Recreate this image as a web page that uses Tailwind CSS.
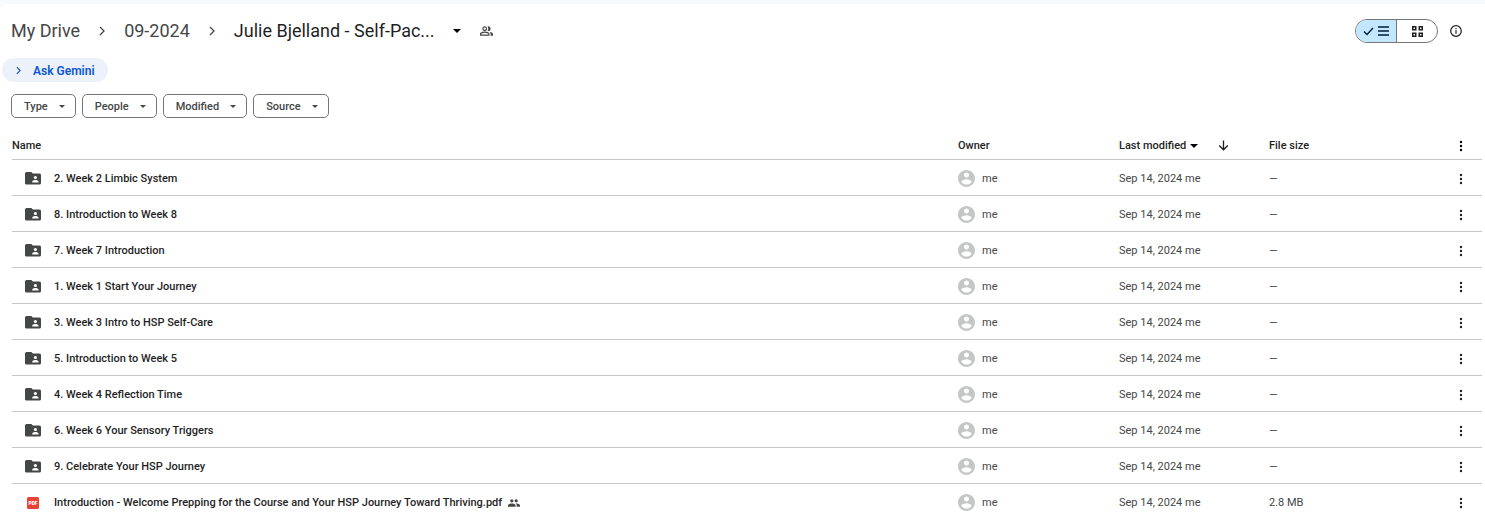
<!DOCTYPE html>
<html lang="en">
<head>
  <meta charset="UTF-8">
  <meta name="viewport" content="width=device-width, initial-scale=1.0">
  <title>Google Drive</title>
  <script src="https://cdn.jsdelivr.net/npm/@tailwindcss/browser@4"></script>
</head>
<body class="bg-[#f8fafd] pt-1 overflow-hidden font-['Roboto','Liberation_Sans',sans-serif] text-[11px] leading-4 text-[#1f1f1f]">
  <!-- Shared icons -->
  <svg class="hidden">
    <symbol id="folder" viewBox="0 0 16 13">
      <path fill="#444746" d="M1.500 0h4.800l1.600 1.600h6.600a1.500 1.500 0 0 1 1.500 1.500v8a1.500 1.500 0 0 1-1.500 1.500h-13a1.500 1.500 0 0 1-1.500-1.500v-9.600a1.500 1.500 0 0 1 1.500-1.500z"/>
      <circle cx="10.400" cy="5.500" r="1.600" fill="#fff"/>
      <path fill="#fff" d="M7.200 10.500v-.7c0-1.200 2-1.800 3.200-1.800s3.200.6 3.200 1.800v.7z"/>
    </symbol>
    <symbol id="pdf" viewBox="0 0 12 12">
      <rect width="12" height="12" rx="1.500" fill="#ea4335"/>
      <text x="6" y="7.700" text-anchor="middle" font-size="5" font-weight="900" fill="#fff">PDF</text>
    </symbol>
    <symbol id="avatar" viewBox="2 2 20 20">
      <path fill="#c4c7c5" d="M12 2C6.480 2 2 6.480 2 12s4.480 10 10 10 10-4.480 10-10S17.520 2 12 2zm0 3c1.660 0 3 1.340 3 3s-1.340 3-3 3-3-1.340-3-3 1.340-3 3-3zm0 14.200c-2.500 0-4.710-1.280-6-3.220.03-1.990 4-3.080 6-3.080 1.990 0 5.970 1.090 6 3.080-1.290 1.940-3.500 3.220-6 3.220z"/>
    </symbol>
    <symbol id="dots" viewBox="0 0 4 12">
      <circle cx="2" cy="2" r="1.200"/><circle cx="2" cy="6" r="1.200"/><circle cx="2" cy="10" r="1.200"/>
    </symbol>
    <symbol id="caret" viewBox="0 0 10 5"><path d="M0 0h10L5 5z"/></symbol>
    <symbol id="chevron" viewBox="0 0 6 10"><path d="M1 1l4 4-4 4" fill="none" stroke="currentColor" stroke-width="1.300"/></symbol>
    <symbol id="people" viewBox="1 4 22 16">
      <path d="M16.670 13.130C18.040 14.060 19 15.320 19 17v3h4v-3c0-2.180-3.570-3.470-6.330-3.870z"/>
      <path d="M15 12c2.210 0 4-1.790 4-4s-1.790-4-4-4c-.47 0-.91.1-1.330.24C14.500 5.270 15 6.580 15 8s-.5 2.730-1.330 3.760c.42.140.86.240 1.330.240z"/>
      <path d="M9 12c2.210 0 4-1.790 4-4s-1.790-4-4-4-4 1.790-4 4 1.790 4 4 4zm0-6c1.100 0 2 .9 2 2s-.9 2-2 2-2-.9-2-2 .9-2 2-2zm0 7c-2.670 0-8 1.340-8 4v3h16v-3c0-2.660-5.330-4-8-4zm6 5H3v-.99C3.200 16.290 6.300 15 9 15s5.800 1.290 6 2v1z"/>
    </symbol>
    <symbol id="group" viewBox="1 5 22 14">
      <path d="M16 11c1.660 0 2.990-1.340 2.990-3S17.660 5 16 5s-3 1.340-3 3 1.340 3 3 3zm-8 0c1.660 0 2.990-1.340 2.990-3S9.660 5 8 5 5 6.340 5 8s1.340 3 3 3zm0 2c-2.330 0-7 1.170-7 3.500V19h14v-2.500c0-2.330-4.670-3.500-7-3.500zm8 0c-.29 0-.62.020-.97.050 1.160.84 1.970 1.970 1.970 3.450V19h6v-2.500c0-2.330-4.670-3.500-7-3.500z"/>
    </symbol>
  </svg>

  <main class="bg-white rounded-tl-lg pr-[3px]">
    <header class="flex items-center justify-between h-[54px] pl-[11px] pr-5">
      <nav class="flex items-center gap-[19px] text-lg text-[#444746]" aria-label="Breadcrumb">
        <a href="#">My Drive</a>
        <svg class="w-[6px] h-[10px]"><use href="#chevron"/></svg>
        <a href="#">09-2024</a>
        <svg class="w-[6px] h-[10px]"><use href="#chevron"/></svg>
        <button class="flex items-center gap-[18px] text-[#1f1f1f]">Julie Bjelland - Self-Pac... <svg class="w-2 h-1"><use href="#caret"/></svg></button>
        <button aria-label="Shared"><svg class="w-[13px] h-[10px]" fill="currentColor"><use href="#people"/></svg></button>
      </nav>
      <div class="flex items-center gap-3">
        <div class="flex h-6 w-[83px] rounded-full border border-[#747775] overflow-hidden">
          <button class="flex-1 flex items-center justify-center gap-1 bg-[#c2e7ff] border-r border-[#747775] text-[#001d35]" aria-label="List layout">
            <svg class="w-[11px] h-[9px]" viewBox="0 0 11 9" fill="none" stroke="currentColor" stroke-width="1.300"><path d="M1 4.500l3 3L10 1"/></svg>
            <svg class="w-[11px] h-[10px]" viewBox="0 0 11 10" stroke="currentColor" stroke-width="1.500"><path d="M0 1h11M0 5h11M0 9h11"/></svg>
          </button>
          <button class="flex-1 flex items-center justify-center" aria-label="Grid layout">
            <svg class="w-[11px] h-[11px]" viewBox="0 0 11 11" fill="none" stroke="currentColor" stroke-width="1.500"><path d="M.75.75h3v3h-3zM7.250.75h3v3h-3zM.75 7.250h3v3h-3zM7.250 7.250h3v3h-3z"/></svg>
          </button>
        </div>
        <button aria-label="View details">
          <svg class="w-3 h-3" viewBox="0 0 12 12" fill="none" stroke="currentColor" stroke-width="1.200"><circle cx="6" cy="6" r="5.300"/><path d="M6 5.200v3.500M6 3v1.300"/></svg>
        </button>
      </div>
    </header>

    <button class="flex items-center gap-3 ml-[2px] h-6 w-[106px] pt-px pl-[14px] rounded-full bg-[#ecf1fa] text-[#0b57d0] text-xs font-semibold">
      <svg class="w-[5px] h-[9px]"><use href="#chevron"/></svg>
      Ask Gemini
    </button>

    <div class="flex gap-[6px] mt-3 pl-[11px] font-medium text-[#444746]">
      <button class="flex items-center gap-[11px] h-6 px-3 pt-px pr-[10px] rounded-[5px] border border-[#747775]">Type <svg class="w-[6px] h-[3px]" fill="currentColor"><use href="#caret"/></svg></button>
      <button class="flex items-center gap-[11px] h-6 px-3 pt-px pr-[10px] rounded-[5px] border border-[#747775]">People <svg class="w-[6px] h-[3px]" fill="currentColor"><use href="#caret"/></svg></button>
      <button class="flex items-center gap-[11px] h-6 px-3 pt-px pr-[10px] rounded-[5px] border border-[#747775]">Modified <svg class="w-[6px] h-[3px]" fill="currentColor"><use href="#caret"/></svg></button>
      <button class="flex items-center gap-[11px] h-6 px-3 pt-px pr-[10px] rounded-[5px] border border-[#747775]">Source <svg class="w-[6px] h-[3px]" fill="currentColor"><use href="#caret"/></svg></button>
    </div>

    <div class="mt-[13px] pl-3">
      <table class="w-full table-fixed text-left">
        <thead>
          <tr class="h-7 border-b border-[#c7c7c7] *:pt-[2px]">
            <th class="font-medium">Name</th>
            <th class="w-[161px] font-medium">Owner</th>
            <th class="w-[150px] font-medium">
              <div class="flex items-center">
                <button class="flex items-center gap-1">Last modified <svg class="w-2 h-1"><use href="#caret"/></svg></button>
                <button class="ml-5" aria-label="Reverse sort direction">
                  <svg class="w-[11px] h-[11px]" viewBox="0 0 11 11" fill="none" stroke="currentColor" stroke-width="1.300"><path d="M5.500 0.500v9.200M1.200 5.500l4.300 4.300 4.300-4.300"/></svg>
                </button>
              </div>
            </th>
            <th class="w-[171px] font-medium">File size</th>
            <th class="w-[42px]"><button class="block mx-auto" aria-label="More options"><svg class="w-1 h-3"><use href="#dots"/></svg></button></th>
          </tr>
        </thead>
        <tbody id="file-list">
          <!-- Files are loaded here by JavaScript -->
        </tbody>
      </table>
    </div>
  </main>

  <script>
    const files = [
      { name: '2. Week 2 Limbic System' },
      { name: '8. Introduction to Week 8' },
      { name: '7. Week 7 Introduction' },
      { name: '1. Week 1 Start Your Journey' },
      { name: '3. Week 3 Intro to HSP Self-Care' },
      { name: '5. Introduction to Week 5' },
      { name: '4. Week 4 Reflection Time' },
      { name: '6. Week 6 Your Sensory Triggers' },
      { name: '9. Celebrate Your HSP Journey' },
      { name: 'Introduction - Welcome Prepping for the Course and Your HSP Journey Toward Thriving.pdf', size: '2.8 MB', pdf: true }
    ];

    document.getElementById('file-list').innerHTML = files.map(file => `
      <tr class="h-9 border-b border-[#c7c7c7] text-[#444746] *:pt-[3px]">
        <td>
          <div class="flex items-center pl-[13px] font-medium text-[#1f1f1f]">
            <span class="flex justify-center w-4 mr-[13px]">
              ${file.pdf ? '<svg class="w-3 h-3"><use href="#pdf"/></svg>' : '<svg class="w-4 h-[13px]"><use href="#folder"/></svg>'}
            </span>
            ${file.name}
            ${file.pdf ? '<svg class="w-3 h-2 ml-[6px]" fill="#444746"><use href="#group"/></svg>' : ''}
          </div>
        </td>
        <td><div class="flex items-center gap-[7px]"><svg class="w-[17px] h-[17px]"><use href="#avatar"/></svg>me</div></td>
        <td>Sep 14, 2024 me</td>
        <td>${file.size || '—'}</td>
        <td><button class="block mx-auto text-[#1f1f1f]" aria-label="More actions"><svg class="w-1 h-3" fill="currentColor"><use href="#dots"/></svg></button></td>
      </tr>
    `).join('');
  </script>
</body>
</html>
